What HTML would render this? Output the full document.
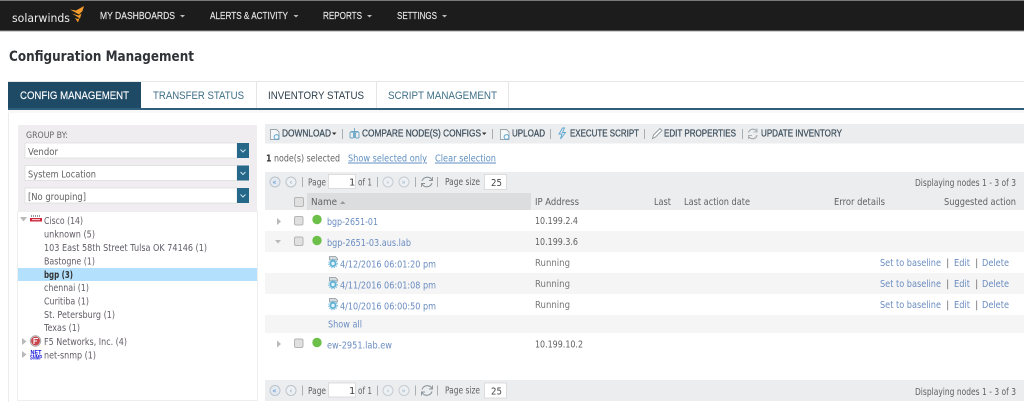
<!DOCTYPE html>
<html><head><meta charset="utf-8"><title>Configuration Management</title>
<style>
html,body{margin:0;padding:0;background:#fff;width:1024px;height:411px;overflow:hidden}
svg{display:block;filter:blur(.35px)}
text{font-family:"DejaVu Sans",sans-serif;font-size:10px;fill:#616161}
.a{font-family:"Liberation Sans",sans-serif}
.m{font-family:"Liberation Sans",sans-serif;font-size:10px;fill:#e8e8e8;stroke:#e8e8e8;stroke-width:.15}
.t{font-family:"Liberation Sans",sans-serif;font-size:11px;fill:#3f6f88}
.b{font-family:"Liberation Sans",sans-serif;font-size:9.8px;fill:#3d4f5c;stroke:#3d4f5c;stroke-width:.25}
.l{fill:#6a8cc0}
.tr{fill:#625c66}
.cb{fill:#e0e0e0;stroke:#b5b5b5;stroke-width:1}
.sep{stroke:#a9b0b5;stroke-width:1}
</style></head><body>
<svg width="1024" height="411" viewBox="0 0 1024 411" xmlns="http://www.w3.org/2000/svg">
<defs>
<g id="pager">
<circle cx="275" cy="0" r="5" fill="#e4eaf2" stroke="#bcc4cc"/><text x="272.300" y="2.500" style="font-size:7px;fill:#5a8fc8">«</text>
<circle cx="291" cy="0" r="5" fill="#eef1f4" stroke="#bcc4cc"/><text x="289.500" y="2.500" style="font-size:7px;fill:#7a9cbc">‹</text>
<path class="sep" d="M302.500-5V5M377.500-5V5M415.500-5V5M437.500-5V5"/>
<text x="308" y="3.500" textLength="18" lengthAdjust="spacingAndGlyphs">Page</text>
<rect x="328.500" y="-7.500" width="27" height="14" fill="#fff" stroke="#dcdcdc"/>
<text x="349" y="3.500" style="fill:#444">1</text>
<text x="358" y="3.500" textLength="14" lengthAdjust="spacingAndGlyphs">of 1</text>
<circle cx="388" cy="0" r="5" fill="#eef1f4" stroke="#c6ccd2"/><text x="386.500" y="2.500" style="font-size:7px;fill:#a0b4c6">›</text>
<circle cx="404" cy="0" r="5" fill="#eef1f4" stroke="#c6ccd2"/><text x="401.500" y="2.500" style="font-size:7px;fill:#a0b4c6">»</text>
<path d="M422 -1A5.500 5.500 0 0 1 432 -2M432 1A5.500 5.500 0 0 1 422 2" fill="none" stroke="#8a9298" stroke-width="1.100"/>
<path d="M432.500 -5V-1.500H429M421.500 5V1.500H425" fill="none" stroke="#8a9298" stroke-width=".9"/>
<text x="445" y="3" textLength="35" lengthAdjust="spacingAndGlyphs">Page size</text>
<rect x="484.500" y="-7.500" width="22" height="15" fill="#fff" stroke="#dcdcdc"/>
<text x="491" y="4" textLength="11" lengthAdjust="spacingAndGlyphs" style="fill:#444">25</text>
</g>
<g id="cfg">
<path d="M1.500 0.500H7.500L9.500 2.500V4H1.500Z" fill="#d8dde0" stroke="#8c959c" stroke-width=".8"/>
<circle cx="5" cy="7.500" r="3.600" fill="#62b2d6"/><circle cx="5" cy="7.500" r="1.700" fill="#e2f4fb"/>
<circle cx="5" cy="7.500" r="4.300" fill="none" stroke="#62b2d6" stroke-width=".9" stroke-dasharray="1.200 1.200"/>
</g>
<g id="ud"><path d="M.5 .5H6.500L9 3V10.500H.5Z" fill="#f6f7f8" stroke="#9aa3a9" stroke-width=".9"/><circle cx="6.500" cy="8" r="2.400" fill="none" stroke="#5aa5d0"/></g>
</defs>

<!-- top bar -->
<rect width="1024" height="31" fill="#1c1c1c"/>
<rect width="1024" height="1" fill="#77797b"/>
<rect y="30" width="1024" height="1" fill="#55585a"/>
<rect y="31" width="1024" height="1" fill="#d0d0d0"/>
<text x="12" y="22" textLength="58" lengthAdjust="spacingAndGlyphs" style="font-size:11.500px;fill:#eee">solarwinds</text>
<path d="M70 9.500L76 10.500 84 6 82.500 11 79 14.500 70 9.500Z" fill="#f39a2b"/>
<path d="M72 13.500L78.500 15.500 81.500 13.500 80 18.500 72 13.500Z" fill="#f39a2b"/>
<path d="M75 18L78 19 79.500 18 78 22.500Z" fill="#f39a2b"/>
<text class="m" x="100" y="19" textLength="75" lengthAdjust="spacingAndGlyphs">MY DASHBOARDS</text>
<path d="M180 15H185L182.500 17.500Z" fill="#bbb"/>
<text class="m" x="210" y="19" textLength="78" lengthAdjust="spacingAndGlyphs">ALERTS &amp; ACTIVITY</text>
<path d="M293.500 15H298.500L296 17.500Z" fill="#bbb"/>
<text class="m" x="323" y="19" textLength="39" lengthAdjust="spacingAndGlyphs">REPORTS</text>
<path d="M367 15H372L369.500 17.500Z" fill="#bbb"/>
<text class="m" x="397" y="19" textLength="40" lengthAdjust="spacingAndGlyphs">SETTINGS</text>
<path d="M442 15H447L444.500 17.500Z" fill="#bbb"/>

<!-- title -->
<text x="9" y="61" textLength="185" lengthAdjust="spacingAndGlyphs" style="font-size:14.500px;font-weight:bold;fill:#2f3338">Configuration Management</text>

<!-- tabs -->
<rect x="8" y="81" width="1016" height="1" fill="#e6e6e6"/>
<rect x="8" y="82" width="133" height="26" fill="#1f4a66"/>
<rect x="8" y="108" width="1016" height="2" fill="#2f5f7c"/>
<path d="M256.500 82V108M376.500 82V108M508.500 82V108" stroke="#e6e6e6"/>
<text class="t" x="20" y="99" textLength="109" lengthAdjust="spacingAndGlyphs" style="fill:#fff;stroke:#fff;stroke-width:.15">CONFIG MANAGEMENT</text>
<text class="t" x="153" y="99" textLength="91" lengthAdjust="spacingAndGlyphs">TRANSFER STATUS</text>
<text class="t" x="268" y="99" textLength="96" lengthAdjust="spacingAndGlyphs" style="fill:#2e3f4c">INVENTORY STATUS</text>
<text class="t" x="388" y="99" textLength="109" lengthAdjust="spacingAndGlyphs">SCRIPT MANAGEMENT</text>
<rect x="8" y="110" width="1" height="292" fill="#ececec"/>
<rect x="8" y="110" width="1016" height="3" fill="#f8f8f8"/>

<!-- left panel -->
<rect x="18" y="125" width="239" height="86" fill="#f0edf0"/>
<text x="26" y="138" textLength="42" lengthAdjust="spacingAndGlyphs" style="font-size:8.500px;fill:#666">GROUP BY:</text>
<g>
<rect x="25" y="143" width="212" height="15" fill="#fff" stroke="#dedede" stroke-width=".8"/>
<rect x="237" y="143" width="12" height="15" fill="#25688a"/>
<path d="M240.500 149.500L243 152 245.500 149.500" fill="none" stroke="#cfe3ec"/>
<text x="28" y="155" textLength="30" lengthAdjust="spacingAndGlyphs">Vendor</text>
<rect x="25" y="165.500" width="212" height="15" fill="#fff" stroke="#dedede" stroke-width=".8"/>
<rect x="237" y="165.500" width="12" height="15" fill="#25688a"/>
<path d="M240.500 172L243 174.500 245.500 172" fill="none" stroke="#cfe3ec"/>
<text x="28" y="177.500" textLength="68" lengthAdjust="spacingAndGlyphs">System Location</text>
<rect x="25" y="188" width="212" height="15" fill="#fff" stroke="#dedede" stroke-width=".8"/>
<rect x="237" y="188" width="12" height="15" fill="#25688a"/>
<path d="M240.500 194.500L243 197 245.500 194.500" fill="none" stroke="#cfe3ec"/>
<text x="28" y="200" textLength="58" lengthAdjust="spacingAndGlyphs">[No grouping]</text>
</g>

<!-- tree -->
<rect x="17.500" y="211.500" width="240" height="189" fill="#fff" stroke="#eeeeee"/>
<rect x="18" y="268" width="239" height="13" fill="#b3e0fd"/>
<path d="M20 217H27L23.500 221.500Z" fill="#b9b9b9"/>
<path d="M30 218H42V221.500H30Z" fill="#cc2a3a"/><path d="M31 216H41" stroke="#667a88" stroke-width="1.400" stroke-dasharray="1 1"/>
<path d="M32 219.700H40" stroke="#fff" stroke-width=".8"/>
<text class="tr" x="44" y="224" textLength="39" lengthAdjust="spacingAndGlyphs">Cisco (14)</text>
<text class="tr" x="44" y="237.500" textLength="51" lengthAdjust="spacingAndGlyphs">unknown (5)</text>
<text class="tr" x="44" y="251" textLength="163" lengthAdjust="spacingAndGlyphs">103 East 58th Street Tulsa OK 74146 (1)</text>
<text class="tr" x="44" y="264.500" textLength="51" lengthAdjust="spacingAndGlyphs">Bastogne (1)</text>
<text x="44" y="278" textLength="29" lengthAdjust="spacingAndGlyphs" style="font-weight:bold;fill:#333">bgp (3)</text>
<text class="tr" x="44" y="291" textLength="45" lengthAdjust="spacingAndGlyphs">chennai (1)</text>
<text class="tr" x="44" y="304.500" textLength="45" lengthAdjust="spacingAndGlyphs">Curitiba (1)</text>
<text class="tr" x="44" y="318" textLength="71" lengthAdjust="spacingAndGlyphs">St. Petersburg (1)</text>
<text class="tr" x="44" y="331" textLength="36" lengthAdjust="spacingAndGlyphs">Texas (1)</text>
<path d="M22 338L26.500 341.500 22 345ZM22 351L26.500 354.500 22 358Z" fill="#b9b9b9"/>
<circle cx="35.500" cy="341" r="4.500" fill="#c9454d"/><circle cx="35.500" cy="341" r="5.200" fill="none" stroke="#aaa" stroke-width="1"/>
<path d="M34 344V338.500H38M34 341H37" fill="none" stroke="#fff" stroke-width="1.100"/>
<text class="tr" x="44" y="345" textLength="83" lengthAdjust="spacingAndGlyphs">F5 Networks, Inc. (4)</text>
<text x="30.500" y="354.500" textLength="11" lengthAdjust="spacingAndGlyphs" style="font-family:'Liberation Sans',sans-serif;font-size:6.500px;font-weight:bold;fill:#1717d8">NET</text>
<text x="30" y="359.500" textLength="12" lengthAdjust="spacingAndGlyphs" style="font-family:'Liberation Sans',sans-serif;font-size:6px;font-weight:bold;fill:#1717d8">SNMP</text>
<text class="tr" x="44" y="358.500" textLength="52" lengthAdjust="spacingAndGlyphs">net-snmp (1)</text>

<!-- toolbar -->
<rect x="265" y="124" width="759" height="19.500" fill="#ebedef"/>
<use href="#ud" x="270" y="129"/>
<text class="b" x="282" y="136.500" textLength="49" lengthAdjust="spacingAndGlyphs">DOWNLOAD</text>
<path d="M332 132.500H336.500L334.200 135Z" fill="#333"/>
<path class="sep" d="M342.500 129V139M492.500 129V139M550.500 129V139M644.500 129V139M742.500 129V139"/>
<path d="M354.500 128V138M351 131.500H358" stroke="#6aa5c4" stroke-width=".9"/>
<rect x="350" y="132" width="3.500" height="6" rx="1" fill="none" stroke="#6aa5c4" stroke-width=".9"/>
<rect x="355.500" y="132" width="3.500" height="6" rx="1" fill="none" stroke="#6aa5c4" stroke-width=".9"/>
<text class="b" x="362" y="136.500" textLength="119" lengthAdjust="spacingAndGlyphs">COMPARE NODE(S) CONFIGS</text>
<path d="M482 132.500H486.500L484.200 135Z" fill="#333"/>
<use href="#ud" x="500" y="129"/>
<text class="b" x="512" y="136.500" textLength="33" lengthAdjust="spacingAndGlyphs">UPLOAD</text>
<path d="M562.500 128L559 134H562L560.500 139 565.500 132.500H562.500L564.500 128Z" fill="none" stroke="#5aa5d0" stroke-width=".9"/>
<text class="b" x="570" y="136.500" textLength="69" lengthAdjust="spacingAndGlyphs">EXECUTE SCRIPT</text>
<path d="M652.500 138.500L653.500 135 660 128.500 662 130.500 655.500 137Z" fill="#fff" stroke="#8d969c" stroke-width=".9"/>
<text class="b" x="664" y="136.500" textLength="72" lengthAdjust="spacingAndGlyphs">EDIT PROPERTIES</text>
<path d="M748.500 132.500A4.500 4.500 0 0 1 756.500 131M757 135A4.500 4.500 0 0 1 749 137" fill="none" stroke="#9aa2a8" stroke-width="1"/>
<path d="M757 128.500V132H753.500M748.500 139V135.500H752" fill="none" stroke="#9aa2a8" stroke-width=".8"/>
<text class="b" x="761" y="136.500" textLength="81" lengthAdjust="spacingAndGlyphs">UPDATE INVENTORY</text>

<!-- selection -->
<text x="266" y="161.500" textLength="74" lengthAdjust="spacingAndGlyphs"><tspan style="font-weight:bold;fill:#333">1</tspan> node(s) selected</text>
<text x="348" y="161.500" textLength="79" lengthAdjust="spacingAndGlyphs" text-decoration="underline" style="fill:#5f8fc0">Show selected only</text>
<text x="435" y="161.500" textLength="61" lengthAdjust="spacingAndGlyphs" text-decoration="underline" style="fill:#5f8fc0">Clear selection</text>

<!-- grid header -->
<rect x="265" y="172" width="759" height="38" fill="#ebedef"/>
<use href="#pager" y="182"/>
<text x="915" y="186" textLength="101" lengthAdjust="spacingAndGlyphs">Displaying nodes 1 - 3 of 3</text>
<rect x="307" y="193" width="224" height="17" fill="#dcdddf"/>
<rect class="cb" x="294.500" y="197.500" width="9" height="9" rx="1.500"/>
<text x="311" y="205" textLength="26" lengthAdjust="spacingAndGlyphs">Name</text>
<path d="M340 204H345.500L342.700 201Z" fill="#999"/>
<text x="535" y="205" textLength="44" lengthAdjust="spacingAndGlyphs">IP Address</text>
<text x="654" y="205" textLength="17" lengthAdjust="spacingAndGlyphs">Last</text>
<text x="684" y="205" textLength="66" lengthAdjust="spacingAndGlyphs">Last action date</text>
<text x="834" y="205" textLength="51" lengthAdjust="spacingAndGlyphs">Error details</text>
<text x="944" y="205" textLength="72" lengthAdjust="spacingAndGlyphs">Suggested action</text>

<!-- rows -->
<rect x="265" y="231" width="759" height="21" fill="#f5f5f5"/>
<rect x="265" y="273" width="759" height="21" fill="#f5f5f5"/>
<rect x="265" y="315" width="759" height="18" fill="#f5f5f5"/>
<path d="M277 218L281 221.500 277 225Z" fill="#b9b9b9"/>
<rect class="cb" x="294.500" y="216.500" width="8.500" height="8.500" rx="1.500"/>
<circle cx="317" cy="219.500" r="4.700" fill="#6cc04a"/>
<text class="l" x="327" y="225" textLength="51" lengthAdjust="spacingAndGlyphs">bgp-2651-01</text>
<text x="535" y="224" textLength="43" lengthAdjust="spacingAndGlyphs">10.199.2.4</text>
<path d="M275 240H281L278 243.500Z" fill="#b9b9b9"/>
<rect class="cb" x="294.500" y="237" width="8.500" height="8.500" rx="1.500"/>
<circle cx="317" cy="240.500" r="4.700" fill="#6cc04a"/>
<text class="l" x="327" y="246" textLength="84" lengthAdjust="spacingAndGlyphs">bgp-2651-03.aus.lab</text>
<text x="535" y="245" textLength="43" lengthAdjust="spacingAndGlyphs">10.199.3.6</text>

<use href="#cfg" x="328" y="256"/>
<text class="l" x="340" y="267.500" textLength="96" lengthAdjust="spacingAndGlyphs">4/12/2016 06:01:20 pm</text>
<text x="535" y="266" textLength="35" lengthAdjust="spacingAndGlyphs" style="fill:#777">Running</text>
<text class="l" x="880" y="266" textLength="61" lengthAdjust="spacingAndGlyphs">Set to baseline</text><text x="946" y="266" style="fill:#777">|</text>
<text class="l" x="954" y="266" textLength="16" lengthAdjust="spacingAndGlyphs">Edit</text><text x="975" y="266" style="fill:#777">|</text>
<text class="l" x="982" y="266" textLength="27" lengthAdjust="spacingAndGlyphs">Delete</text>

<use href="#cfg" x="328" y="277"/>
<text class="l" x="340" y="288.500" textLength="96" lengthAdjust="spacingAndGlyphs">4/11/2016 06:01:08 pm</text>
<text x="535" y="287" textLength="35" lengthAdjust="spacingAndGlyphs" style="fill:#777">Running</text>
<text class="l" x="880" y="287" textLength="61" lengthAdjust="spacingAndGlyphs">Set to baseline</text><text x="946" y="287" style="fill:#777">|</text>
<text class="l" x="954" y="287" textLength="16" lengthAdjust="spacingAndGlyphs">Edit</text><text x="975" y="287" style="fill:#777">|</text>
<text class="l" x="982" y="287" textLength="27" lengthAdjust="spacingAndGlyphs">Delete</text>

<use href="#cfg" x="328" y="298"/>
<text class="l" x="340" y="309.500" textLength="96" lengthAdjust="spacingAndGlyphs">4/10/2016 06:00:50 pm</text>
<text x="535" y="308" textLength="35" lengthAdjust="spacingAndGlyphs" style="fill:#777">Running</text>
<text class="l" x="880" y="308" textLength="61" lengthAdjust="spacingAndGlyphs">Set to baseline</text><text x="946" y="308" style="fill:#777">|</text>
<text class="l" x="954" y="308" textLength="16" lengthAdjust="spacingAndGlyphs">Edit</text><text x="975" y="308" style="fill:#777">|</text>
<text class="l" x="982" y="308" textLength="27" lengthAdjust="spacingAndGlyphs">Delete</text>

<text class="l" x="328" y="327.500" textLength="34" lengthAdjust="spacingAndGlyphs">Show all</text>

<path d="M277 340.500L281 344 277 347.500Z" fill="#b9b9b9"/>
<rect class="cb" x="294.500" y="339" width="8.500" height="8.500" rx="1.500"/>
<circle cx="317" cy="342.500" r="4.700" fill="#6cc04a"/>
<text class="l" x="327" y="348.500" textLength="65" lengthAdjust="spacingAndGlyphs">ew-2951.lab.ew</text>
<text x="535" y="347.500" textLength="48" lengthAdjust="spacingAndGlyphs">10.199.10.2</text>

<!-- bottom pager -->
<rect x="265" y="380" width="759" height="21" fill="#ebedef"/>
<use href="#pager" y="390.500"/>
<text x="915" y="395" textLength="101" lengthAdjust="spacingAndGlyphs">Displaying nodes 1 - 3 of 3</text>
</svg>
</body></html>
